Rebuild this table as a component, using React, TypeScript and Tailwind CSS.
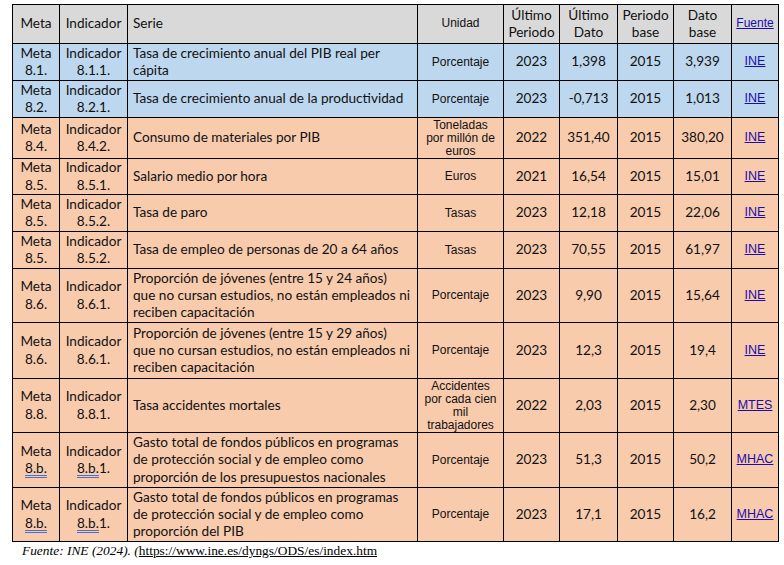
import React from 'react';

type Row = {
  meta: React.ReactNode;
  ind: React.ReactNode;
  serie: React.ReactNode;
  unidad: React.ReactNode;
  ultPeriodo: string;
  ultDato: string;
  base: string;
  datoBase: string;
  fuente: string;
  blue?: boolean;
  h: string;
};

const cal = "font-['Lato','Open_Sans',sans-serif]";
const ari = "font-['Liberation_Sans',Arial,sans-serif]";

const B = ({ t }: { t: string }) => (
  <span className="underline decoration-double decoration-[#4b6fd0] underline-offset-2">{t}</span>
);

const rows: Row[] = [
  { meta: '8.1.', ind: '8.1.1.', serie: <>Tasa de crecimiento anual del PIB real per<br />cápita</>, unidad: 'Porcentaje', ultPeriodo: '2023', ultDato: '1,398', base: '2015', datoBase: '3,939', fuente: 'INE', blue: true, h: 'h-[37px]' },
  { meta: '8.2.', ind: '8.2.1.', serie: 'Tasa de crecimiento anual de la productividad', unidad: 'Porcentaje', ultPeriodo: '2023', ultDato: '-0,713', base: '2015', datoBase: '1,013', fuente: 'INE', blue: true, h: 'h-[37px]' },
  { meta: '8.4.', ind: '8.4.2.', serie: 'Consumo de materiales por PIB', unidad: <>Toneladas<br />por millón de<br />euros</>, ultPeriodo: '2022', ultDato: '351,40', base: '2015', datoBase: '380,20', fuente: 'INE', h: 'h-[41px]' },
  { meta: '8.5.', ind: '8.5.1.', serie: 'Salario medio por hora', unidad: 'Euros', ultPeriodo: '2021', ultDato: '16,54', base: '2015', datoBase: '15,01', fuente: 'INE', h: 'h-[36px]' },
  { meta: '8.5.', ind: '8.5.2.', serie: 'Tasa de paro', unidad: 'Tasas', ultPeriodo: '2023', ultDato: '12,18', base: '2015', datoBase: '22,06', fuente: 'INE', h: 'h-[37px]' },
  { meta: '8.5.', ind: '8.5.2.', serie: 'Tasa de empleo de personas de 20 a 64 años', unidad: 'Tasas', ultPeriodo: '2023', ultDato: '70,55', base: '2015', datoBase: '61,97', fuente: 'INE', h: 'h-[37px]' },
  { meta: '8.6.', ind: '8.6.1.', serie: <>Proporción de jóvenes (entre 15 y 24 años)<br />que no cursan estudios, no están empleados ni<br />reciben capacitación</>, unidad: 'Porcentaje', ultPeriodo: '2023', ultDato: '9,90', base: '2015', datoBase: '15,64', fuente: 'INE', h: 'h-[54px]' },
  { meta: '8.6.', ind: '8.6.1.', serie: <>Proporción de jóvenes (entre 15 y 29 años)<br />que no cursan estudios, no están empleados ni<br />reciben capacitación</>, unidad: 'Porcentaje', ultPeriodo: '2023', ultDato: '12,3', base: '2015', datoBase: '19,4', fuente: 'INE', h: 'h-[56px]' },
  { meta: '8.8.', ind: '8.8.1.', serie: 'Tasa accidentes mortales', unidad: <>Accidentes<br />por cada cien<br />mil<br />trabajadores</>, ultPeriodo: '2022', ultDato: '2,03', base: '2015', datoBase: '2,30', fuente: 'MTES', h: 'h-[54px]' },
  { meta: <B t="8.b." />, ind: <><B t="8.b." />1.</>, serie: <>Gasto total de fondos públicos en programas<br />de protección social y de empleo como<br />proporción de los presupuestos nacionales</>, unidad: 'Porcentaje', ultPeriodo: '2023', ultDato: '51,3', base: '2015', datoBase: '50,2', fuente: 'MHAC', h: 'h-[55px]' },
  { meta: <B t="8.b." />, ind: <><B t="8.b." />1.</>, serie: <>Gasto total de fondos públicos en programas<br />de protección social y de empleo como<br />proporción del PIB</>, unidad: 'Porcentaje', ultPeriodo: '2023', ultDato: '17,1', base: '2015', datoBase: '16,2', fuente: 'MHAC', h: 'h-[54px]' },
];

const td = 'border-[1.5px] border-black p-0 align-middle';

export default function App() {
  return (
    <div className="w-[784px] h-[565px] bg-white pl-[12px] pt-[4px] text-[#111]">
      <table className={`border-collapse table-fixed w-[766px] ${cal} text-[13.6px] leading-[17.3px]`}>
        <colgroup>
          <col className="w-[47px]" />
          <col className="w-[68px]" />
          <col className="w-[290px]" />
          <col className="w-[86px]" />
          <col className="w-[56px]" />
          <col className="w-[58px]" />
          <col className="w-[56px]" />
          <col className="w-[58px]" />
          <col className="w-[47px]" />
        </colgroup>
        <thead>
          <tr className="h-[39px] bg-[#d9d9d9]">
            <th className={`${td} font-normal text-center`}>Meta</th>
            <th className={`${td} font-normal text-center`}>Indicador</th>
            <th className={`${td} font-normal text-left pl-[5px]`}>Serie</th>
            <th className={`${td} font-normal text-center ${ari} text-[12px]`}>Unidad</th>
            <th className={`${td} font-normal text-center`}>Último<br />Periodo</th>
            <th className={`${td} font-normal text-center`}>Último<br />Dato</th>
            <th className={`${td} font-normal text-center`}>Periodo<br />base</th>
            <th className={`${td} font-normal text-center`}>Dato<br />base</th>
            <th className={`${td} font-normal text-center ${ari} text-[12px]`}>
              <span className="underline text-[#1a0dab]">Fuente</span>
            </th>
          </tr>
        </thead>
        <tbody>
          {rows.map((r, i) => (
            <tr key={i} className={`${r.h} ${r.blue ? 'bg-[#bdd7ee]' : 'bg-[#f8cbad]'}`}>
              <td className={`${td} text-center`}>Meta<br />{r.meta}</td>
              <td className={`${td} text-center`}>Indicador<br />{r.ind}</td>
              <td className={`${td} text-left pl-[5px] whitespace-nowrap`}>{r.serie}</td>
              <td className={`${td} text-center ${ari} text-[12px] leading-[13px]`}>{r.unidad}</td>
              <td className={`${td} text-center`}>{r.ultPeriodo}</td>
              <td className={`${td} text-center`}>{r.ultDato}</td>
              <td className={`${td} text-center`}>{r.base}</td>
              <td className={`${td} text-center`}>{r.datoBase}</td>
              <td className={`${td} text-center ${ari} text-[12.5px]`}>
                <span className="underline text-[#1a0dab]">{r.fuente}</span>
              </td>
            </tr>
          ))}
        </tbody>
      </table>
      <p className="pl-[10px] pt-[1px] font-['Liberation_Serif','Times_New_Roman',serif] text-[13.4px] leading-[16px] text-black">
        <span className="italic">Fuente: INE (2024). (</span>
        <span className="underline">https://www.ine.es/dyngs/ODS/es/index.htm</span>
      </p>
    </div>
  );
}
